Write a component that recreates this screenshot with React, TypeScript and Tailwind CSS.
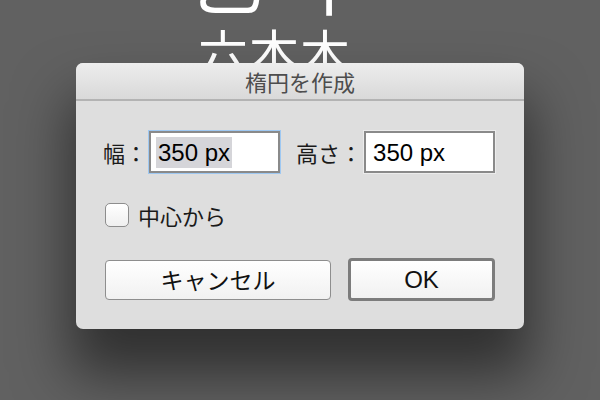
const jp = "font-['Noto_Sans_CJK_JP','Liberation_Sans',sans-serif]";
const latin = "font-['Liberation_Sans','Noto_Sans_CJK_JP',sans-serif]";

function SizeField({ label, value, focused }: { label: string; value: string; focused?: boolean }) {
  return (
    <div className="flex shrink-0 items-center">
      <span className={`${jp} whitespace-nowrap text-[22px] leading-none text-[#1a1a1a]`}>{label}</span>
      <div
        className={`ml-[2px] flex h-[42px] w-[131px] shrink-0 items-center border-2 border-[#8a8a8a] bg-white pl-[5px] ${
          focused ? "outline outline-[1.5px] outline-[#9ec8f2]" : "outline outline-1 outline-[#ececec]"
        }`}
      >
        <span
          className={`${latin} whitespace-nowrap px-[2px] pt-[1px] text-[24px] leading-[30px] text-black ${
            focused ? "bg-[#d5d5d9]" : ""
          }`}
        >
          {value}
        </span>
      </div>
    </div>
  );
}

export default function App() {
  return (
    <main className="relative h-[400px] w-[600px] overflow-hidden bg-[#616161]">
      <div className={`${jp} absolute left-[194px] top-[-50px] flex flex-col text-white`}>
        <div className="flex gap-[30px] text-[70px] leading-[60px]">
          <span>乙</span>
          <span>十</span>
        </div>
        <div className="mt-[12px] pl-[4px] text-[50px] leading-[56px] tracking-[1px]">六本木</div>
      </div>

      <section className="relative ml-[76px] mt-[63px] w-[448px] overflow-hidden rounded-[7px] bg-[#dedede] shadow-[0_40px_55px_6px_rgba(0,0,0,0.5)]">
        <header className="flex h-[38px] items-center justify-center border-b-2 border-[#b3b3b3] bg-gradient-to-b from-[#ededed] to-[#d9d9d9]">
          <h1 className={`${jp} text-[22px] leading-none text-[#4d4d4d]`}>楕円を作成</h1>
        </header>

        <div className="flex flex-col pb-[28px] pl-[27px] pr-[29px] pt-[30px]">
          <div className="flex items-center gap-[16px]">
            <SizeField label="幅：" value="350 px" focused />
            <SizeField label="高さ：" value="350 px" />
          </div>

          <label className="mt-[30px] flex items-center gap-[9px] pl-[2px]">
            <span className="h-[24px] w-[24px] rounded-[5px] border-[1.5px] border-[#8d8d8d] bg-gradient-to-b from-white to-[#efefef]" />
            <span className={`${jp} text-[22px] leading-none text-[#1a1a1a]`}>中心から</span>
          </label>

          <div className="mt-[31px] flex items-center gap-[17px] pl-[2px]">
            <button className={`${jp} h-[40px] w-[226px] rounded-[4px] border-[1.5px] border-[#8e8e8e] bg-gradient-to-b from-white to-[#f1f1f1] text-[23px] leading-none text-[#111]`}>
              キャンセル
            </button>
            <button className={`${latin} h-[43px] w-[147px] rounded-[4px] border-[3px] border-[#7c7c7c] bg-gradient-to-b from-white to-[#f1f1f1] text-[24px] leading-none text-[#111]`}>
              OK
            </button>
          </div>
        </div>
      </section>
    </main>
  );
}
